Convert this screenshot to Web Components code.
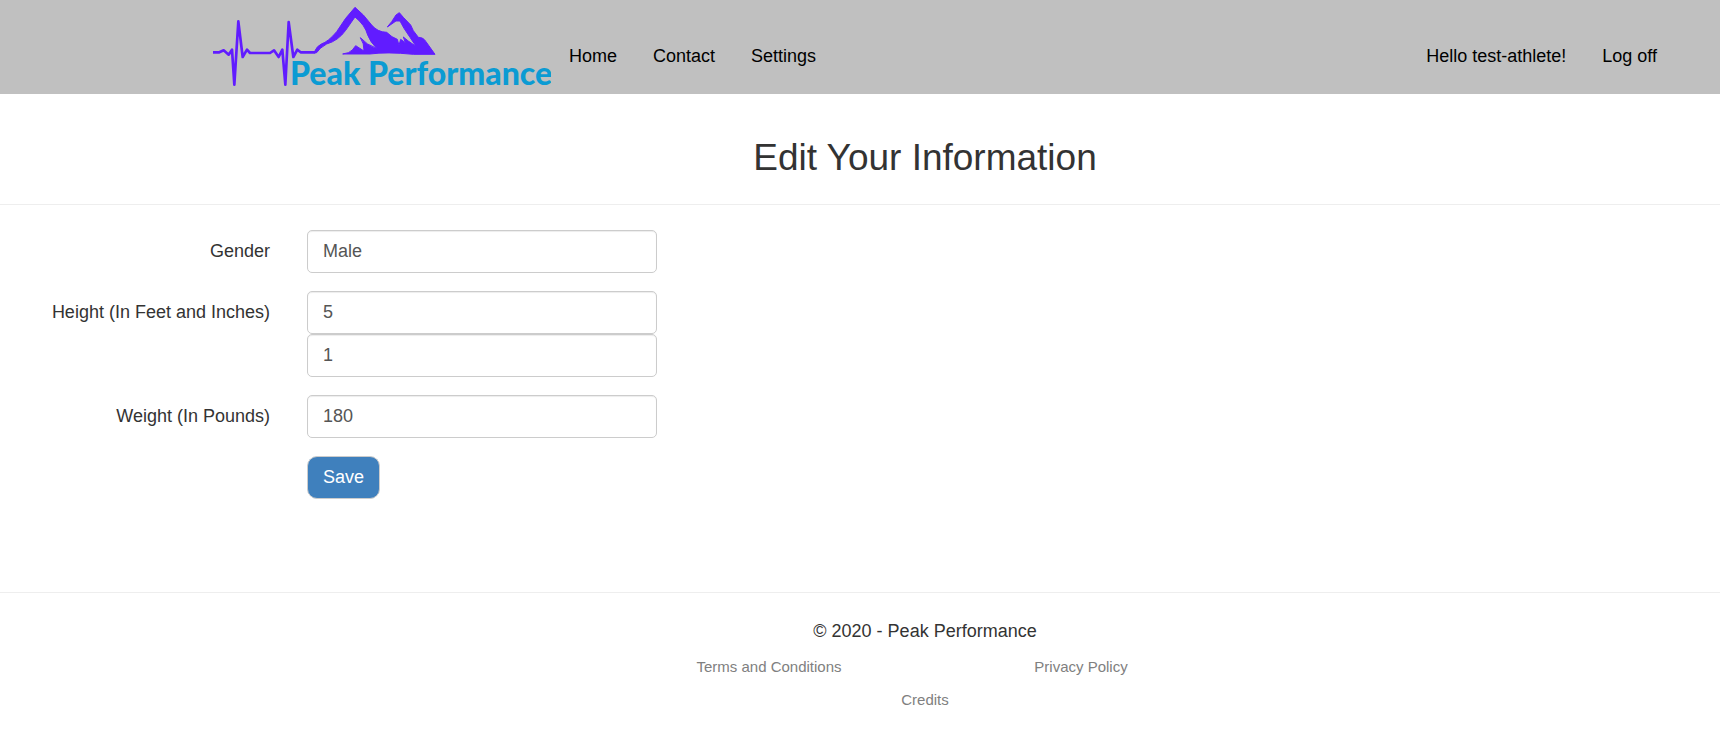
<!DOCTYPE html>
<html lang="en">
<head>
<meta charset="utf-8">
<meta name="viewport" content="width=device-width, initial-scale=1">
<title>Edit Your Information - Peak Performance</title>
<style>
  body { margin: 0; background: #fff; color: #333; font: 18px/25px "Liberation Sans", Arial, sans-serif; }
</style>
</head>
<body>
<pp-header></pp-header>
<pp-page-title>Edit Your Information</pp-page-title>
<pp-athlete-form></pp-athlete-form>
<pp-footer></pp-footer>

<script>
const define = (name, html) => {
  const template = document.createElement('template');
  template.innerHTML = html;
  customElements.define(name, class extends HTMLElement {
    constructor() {
      super();
      this.attachShadow({ mode: 'open' }).append(template.content.cloneNode(true));
    }
  });
};

define('pp-logo', `
<style>
  :host { display: block; width: 338px; height: 94px; }
  svg { display: block; width: 100%; height: 100%; }
  text { font: 900 32px Lato, sans-serif; fill: #0b9bd3; }
</style>
<svg viewBox="213 0 338 94" role="img" aria-label="Peak Performance">
  <g transform="translate(200 0) scale(.33333)" stroke="#611cff" stroke-linejoin="round">
    <path fill="none" stroke-width="8" d="M39 157H58L71 151L86 164L96 149L103 254L115 64L128 171L141 149L150 159H210L222 151L236 171L247 149L256 254L266 66L280 171L292 149L302 157H346"/>
    <path fill="#611cff" stroke-width="3" d="M342 158Q350 138 364 132Q385 125 410 95L437 55L465 22L490 45L515 75Q532 96 560 97L576 110L592 118L597 136L602 118L616 128L610 111Q622 122 648 139L630 112L612 85L600 63L588 63L562 81L575 65L588 45L598 38L610 52L632 75L640 92L655 112Q670 112 678 125L705 163H640Q560 155 510 162H428Q448 160 457 150L467 137L492 153Q493 130 481 113Q500 135 530 145Q510 125 503 105Q495 75 465 51L437 91Q415 122 380 132Q358 144 350 158Z"/>
  </g>
  <text x="290" y="85">Peak Performance</text>
</svg>`);

define('pp-nav-link', `
<style>
  :host { display: block; }
  a { display: block; padding: 18px; color: #000; text-decoration: none; line-height: 25px; white-space: nowrap; }
</style>
<a href="#"><slot></slot></a>`);

define('pp-header', `
<style>
  :host { display: block; background: #c0c0c0; }
  header { display: flex; align-items: center; min-height: 94px; padding: 0 45px 0 213px; }
  nav { display: flex; padding-top: 18px; }
  .account { margin-left: auto; }
</style>
<header>
  <pp-logo></pp-logo>
  <nav aria-label="Main">
    <pp-nav-link>Home</pp-nav-link>
    <pp-nav-link>Contact</pp-nav-link>
    <pp-nav-link>Settings</pp-nav-link>
  </nav>
  <nav class="account" aria-label="Account">
    <pp-nav-link>Hello test-athlete!</pp-nav-link>
    <pp-nav-link>Log off</pp-nav-link>
  </nav>
</header>`);

define('pp-page-title', `
<style>
  :host { display: block; padding: 42px 0 24px 130px; border-bottom: 1px solid #eee; text-align: center; }
  h2 { margin: 0; font-size: 37px; line-height: 44px; font-weight: 400; }
</style>
<h2><slot></slot></h2>`);

define('pp-athlete-form', `
<style>
  :host { display: block; padding: 25px 19px 93px 0; }
  form { display: grid; grid-template-columns: 270px minmax(0, 350px); gap: 18px 37px; }
  label { padding-top: 9px; text-align: right; }
  input, button { box-sizing: border-box; height: 43px; padding: 0 15px; border: 1px solid #ccc; font: inherit; }
  input { display: block; width: 100%; border-radius: 5px; color: #555; background: #fff; box-shadow: inset 0 1px 1px rgba(0, 0, 0, .075); }
  button { grid-column: 2; justify-self: start; border-radius: 10px; color: #fff; background: #3f80bd; }
</style>
<form>
  <label for="gender">Gender</label>
  <input id="gender" value="Male">
  <label for="feet">Height (In Feet and Inches)</label>
  <div>
    <input id="feet" value="5">
    <input id="inches" value="1" aria-label="Inches">
  </div>
  <label for="weight">Weight (In Pounds)</label>
  <input id="weight" value="180">
  <button type="button">Save</button>
</form>`);

define('pp-footer', `
<style>
  :host { display: block; padding: 26px 0 19px 130px; border-top: 1px solid #eee; text-align: center; }
  p { margin: 0 0 10px; }
  ul { display: grid; grid-template-columns: 1fr 1fr; row-gap: 8px; max-width: 624px; margin: 0 auto; padding: 0; list-style: none; font-size: 15px; }
  .wide { grid-column: 1 / -1; }
  a { color: #808080; text-decoration: none; }
</style>
<footer>
  <p>© 2020 - Peak Performance</p>
  <ul>
    <li><a href="#">Terms and Conditions</a></li>
    <li><a href="#">Privacy Policy</a></li>
    <li class="wide"><a href="#">Credits</a></li>
  </ul>
</footer>`);
</script>
</body>
</html>
